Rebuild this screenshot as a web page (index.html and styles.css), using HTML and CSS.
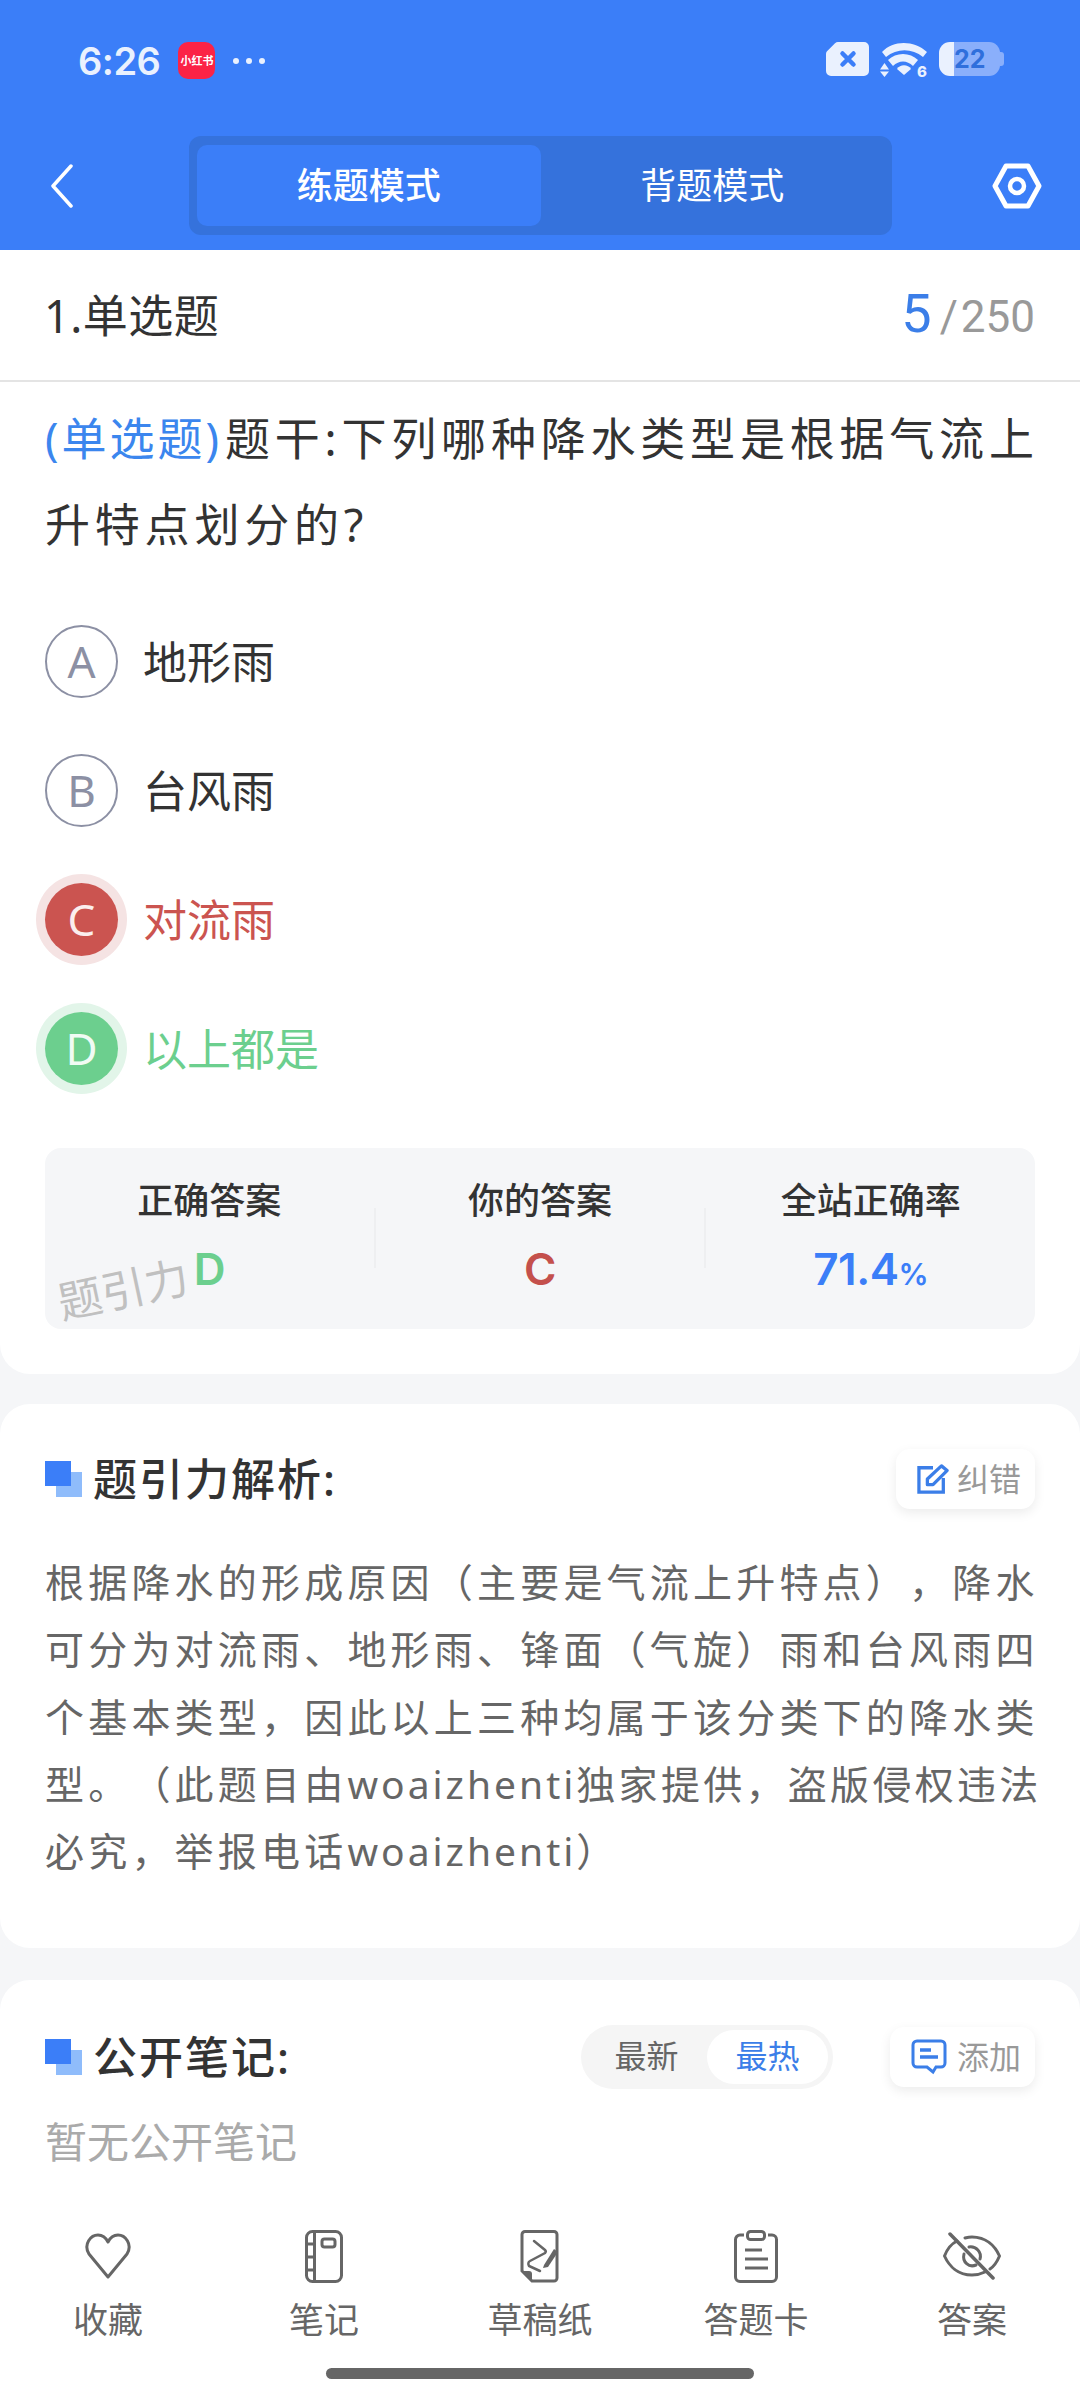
FILE: index.html
```html
<!DOCTYPE html>
<html lang="zh-CN">
<head>
    <meta charset="UTF-8">
    <meta name="viewport" content="width=device-width, initial-scale=1.0">
    <title>题引力</title>
    <link rel="stylesheet" href="styles.css">
</head>
<body>
    <div class="page">
        <header class="header">
            <div class="status">
                <div class="status-left">
                    <span class="time">6:26</span>
                    <span class="app-badge">小红书</span>
                    <span class="dots"><i></i><i></i><i></i></span>
                </div>
                <div class="status-right">
                    <svg width="43" height="34" viewBox="0 0 43 34">
                        <path d="M12 0H38a5 5 0 0 1 5 5V29a5 5 0 0 1-5 5H5a5 5 0 0 1-5-5V12a4 4 0 0 1 1.500-3.200L9 1.200A5 5 0 0 1 12 0Z" fill="#eaf1fe"/>
                        <path d="M16.500 11.500 L27.500 22.500 M27.500 11.500 L16.500 22.500" stroke="#3b7ef8" stroke-width="4.500" stroke-linecap="round"/>
                    </svg>
                    <svg width="48" height="42" viewBox="0 0 48 42">
                        <path d="M2 10 C13 -2 34 -2 47 10 L43 15 C32 6 17 6 6 15 Z" fill="#eaf1fe"/>
                        <path d="M8 18 C16 10 30 10 38 18 L33 24 C27 18 19 18 13 24 Z" fill="#eaf1fe"/>
                        <path d="M17 27 C20 22 28 22 31 27 L24 33 Z" fill="#eaf1fe"/>
                        <path d="M0 27.500 L4.500 21 L9 27.500 Z M0 29.500 L4.500 35 L9 29.500 Z" fill="#eaf1fe"/>
                        <text x="37" y="35" class="wifi-six">6</text>
                    </svg>
                    <div class="battery">
                        <div class="battery-body">22</div>
                        <i class="battery-nub"></i>
                    </div>
                </div>
            </div>
            <nav class="topnav">
                <svg class="back" width="24" height="44" viewBox="0 0 24 44">
                    <path d="M21 2 L3 22 L21 42" fill="none" stroke="#fff" stroke-width="3.500" stroke-linecap="round" stroke-linejoin="round"/>
                </svg>
                <div class="modes">
                    <div class="mode active">练题模式</div>
                    <div class="mode">背题模式</div>
                </div>
                <svg class="gear" width="50" height="46" viewBox="0 0 50 46">
                    <path d="M14 3 H36 L47 23 L36 43 H14 L3 23 Z" fill="none" stroke="#fff" stroke-width="5" stroke-linejoin="round"/>
                    <circle cx="25" cy="23" r="7" fill="none" stroke="#fff" stroke-width="4.500"/>
                </svg>
            </nav>
        </header>

        <section class="card card-first">
            <div class="title-row">
                <span class="title">1.单选题</span>
                <span class="counter"><b>5</b><i>/</i>250</span>
            </div>
            <div class="question"><span class="tag">(单选题)</span>题干:下列哪种降水类型是根据气流上升特点划分的?</div>

            <div class="options">
                <div class="option"><span class="letter">A</span>地形雨</div>
                <div class="option"><span class="letter">B</span>台风雨</div>
                <div class="option wrong"><span class="letter">C</span>对流雨</div>
                <div class="option right"><span class="letter">D</span>以上都是</div>
            </div>

            <div class="stats">
                <div class="stat">
                    <div class="stat-label">正确答案</div>
                    <div class="stat-value green">D</div>
                </div>
                <i class="stat-sep"></i>
                <div class="stat">
                    <div class="stat-label">你的答案</div>
                    <div class="stat-value red">C</div>
                </div>
                <i class="stat-sep"></i>
                <div class="stat">
                    <div class="stat-label">全站正确率</div>
                    <div class="stat-value blue">71.4<small>%</small></div>
                </div>
                <div class="watermark">题引力</div>
            </div>
        </section>

        <section class="card card-analysis">
            <div class="card-head">
                <h2 class="heading"><span class="squares"></span>题引力解析:</h2>
                <div class="tool-btn">
                    <svg width="32" height="30" viewBox="0 0 34 32">
                        <path d="M17 4 H2 V30 H28 V15" fill="none" stroke="#3b7ee8" stroke-width="3.500"/>
                        <path d="M11 22 V16 L26 2 L32 7 L17 22 Z" fill="none" stroke="#3b7ee8" stroke-width="3.500" stroke-linejoin="round"/>
                    </svg>
                    <span>纠错</span>
                </div>
            </div>
            <p class="analysis">根据降水的形成原因（主要是气流上升特点），降水可分为对流雨、地形雨、锋面（气旋）雨和台风雨四个基本类型，因此以上三种均属于该分类下的降水类型。（此题目由<span class="latin">woaizhenti</span><span class="tight">独家提供，盗版侵权违法</span><br>必究，举报电话<span class="latin">woaizhenti</span>）</p>
        </section>

        <section class="card card-notes">
            <div class="card-head">
                <h2 class="heading"><span class="squares"></span>公开笔记:</h2>
                <div class="notes-tools">
                    <div class="sorter">
                        <span>最新</span>
                        <span class="on">最热</span>
                    </div>
                    <div class="tool-btn tool-add">
                        <svg width="36" height="36" viewBox="0 0 36 36">
                            <path d="M6 2 H30 A4 4 0 0 1 34 6 V24 A4 4 0 0 1 30 28 H25 L22 33 L16 28 H6 A4 4 0 0 1 2 24 V6 A4 4 0 0 1 6 2 Z" fill="none" stroke="#3b7ee8" stroke-width="3"/>
                            <path d="M9 11 H20 M9 18 H27" stroke="#3b7ee8" stroke-width="3.500"/>
                        </svg>
                        <span>添加</span>
                    </div>
                </div>
            </div>
            <div class="no-notes">暂无公开笔记</div>
        </section>

        <footer class="tabbar">
            <div class="tab">
                <div class="tab-icon">
                    <svg width="46" height="46" viewBox="0 0 46 46">
                        <path d="M23 44 L4 21 C-2 11 6 2 13 2 C18 2 21 5 23 9 C25 5 28 2 33 2 C40 2 48 11 42 21 Z" fill="none" stroke="#666" stroke-width="3" stroke-linejoin="round"/>
                    </svg>
                </div>
                <span>收藏</span>
            </div>
            <div class="tab">
                <div class="tab-icon">
                    <svg width="38" height="53" viewBox="0 0 38 53">
                        <rect x="1.500" y="1.500" width="35" height="50" rx="6" fill="none" stroke="#666" stroke-width="3"/>
                        <path d="M9.500 2 V51 M2 14 H9 M2 27 H9 M2 40 H9" stroke="#666" stroke-width="3"/>
                        <rect x="17" y="9" width="13" height="8" rx="2.500" fill="none" stroke="#666" stroke-width="3"/>
                    </svg>
                </div>
                <span>笔记</span>
            </div>
            <div class="tab">
                <div class="tab-icon">
                    <svg width="40" height="53" viewBox="0 0 40 53">
                        <path d="M5 1.500 H34 A3 3 0 0 1 37 4.500 V48 A3 3 0 0 1 34 51 H12 L2 41 V4.500 A3 3 0 0 1 5 1.500 Z" fill="none" stroke="#666" stroke-width="3"/>
                        <path d="M2 41 H9 A3 3 0 0 1 12 44 V51 Z" fill="#666"/>
                        <path d="M14 11 L25 20 C26 21 26 22 25 23 L10 31 C8 32 8 34 9 36 L20 41" fill="none" stroke="#666" stroke-width="2.500" stroke-linecap="round"/>
                        <path d="M24 35 L34 19 L38 22 L28 37 L23 38 Z" fill="#666"/>
                    </svg>
                </div>
                <span>草稿纸</span>
            </div>
            <div class="tab">
                <div class="tab-icon">
                    <svg width="44" height="53" viewBox="0 0 44 53">
                        <path d="M10 5 H6 A4.500 4.500 0 0 0 1.500 9.500 V47 A4.500 4.500 0 0 0 6 51.500 H38 A4.500 4.500 0 0 0 42.500 47 V9.500 A4.500 4.500 0 0 0 38 5 H34" fill="none" stroke="#666" stroke-width="3"/>
                        <rect x="13.500" y="1.500" width="17" height="8" rx="3" fill="none" stroke="#666" stroke-width="3"/>
                        <path d="M11 20 H28 M11 29 H34 M11 38 H34" stroke="#666" stroke-width="3"/>
                    </svg>
                </div>
                <span>答题卡</span>
            </div>
            <div class="tab">
                <div class="tab-icon">
                    <svg width="58" height="48" viewBox="0 0 58 48">
                        <path d="M14 9 C6 13 3 20 1.500 24 C6 34 15 43 29 43 C34 43 38 42 42 40" fill="none" stroke="#666" stroke-width="3" stroke-linecap="round"/>
                        <path d="M22 6 C24 5.500 27 5 29 5 C43 5 52 14 56.500 24 C54 30 50 35 47 37" fill="none" stroke="#666" stroke-width="3" stroke-linecap="round"/>
                        <path d="M21 22 C19 30 26 36 33 33 M26 15 C33 14 39 20 37 27" fill="none" stroke="#666" stroke-width="3" stroke-linecap="round"/>
                        <path d="M7 2 L50 46" stroke="#666" stroke-width="3.500" stroke-linecap="round"/>
                    </svg>
                </div>
                <span>答案</span>
            </div>
        </footer>
        <div class="home-bar"><i></i></div>
    </div>
</body>
</html>
```

FILE: styles.css
```css
* {
    box-sizing: border-box;
}

body {
    margin: 0;
    font-family: "Noto Sans", "Noto Sans CJK SC", sans-serif;
    background-color: #f5f6f8;
    color: #333;
    text-spacing-trim: space-all;
}

.page {
    width: 1080px;
    height: 2400px;
    display: flex;
    flex-direction: column;
    overflow: hidden;
}

/* 顶部 */
.header {
    height: 250px;
    background-color: #3b7ef8;
}

.status {
    height: 136px;
    padding: 42px 76px 0 78px;
    display: flex;
    justify-content: space-between;
    align-items: flex-start;
}

.status-left {
    display: flex;
    align-items: center;
    gap: 18px;
    height: 37px;
}

.time {
    font-family: Inter, sans-serif;
    font-size: 38px;
    font-weight: 600;
    letter-spacing: -0.5px;
    color: #eaf1fe;
}

.app-badge {
    width: 37px;
    height: 37px;
    border-radius: 10px;
    background-color: #fb2346;
    color: #fff;
    font-size: 11px;
    font-weight: 700;
    line-height: 37px;
    text-align: center;
    white-space: nowrap;
}

.dots {
    display: flex;
    gap: 7px;
}

.dots i {
    width: 6px;
    height: 6px;
    border-radius: 50%;
    background-color: #eaf1fe;
}

.status-right {
    display: flex;
    align-items: flex-start;
    gap: 11px;
    height: 42px;
}

.wifi-six {
    font-family: Inter, sans-serif;
    font-size: 15px;
    font-weight: 800;
    fill: #eaf1fe;
}

.battery {
    display: flex;
    align-items: center;
}

.battery-body {
    width: 61px;
    height: 34px;
    border-radius: 11px;
    background: linear-gradient(to right, #eaf1fe 0, #eaf1fe 15px, #8aaffb 15px);
    padding-left: 15px;
    font-family: Inter, sans-serif;
    font-size: 25px;
    font-weight: 700;
    line-height: 34px;
    color: #2f6fdc;
}

.battery-nub {
    width: 4px;
    height: 14px;
    border-radius: 0 3px 3px 0;
    background-color: #8aaffb;
}

.topnav {
    height: 99px;
    padding: 0 38px 0 50px;
    display: flex;
    align-items: center;
}

.modes {
    width: 703px;
    height: 99px;
    margin-left: 115px;
    padding: 9px 8px;
    display: flex;
    border-radius: 12px;
    background-color: #3572dc;
}

.gear {
    margin-left: auto;
}

.mode {
    flex: 1;
    border-radius: 10px;
    color: #fff;
    font-size: 36px;
    line-height: 81px;
    text-align: center;
}

.mode.active {
    background-color: #3b7ef8;
    font-weight: 500;
}

/* 题目 */
.card {
    background-color: #fff;
}

.card-first {
    height: 1124px;
    border-radius: 0 0 30px 30px;
    padding: 0 45px;
}

.title-row {
    height: 132px;
    margin: 0 -45px;
    padding: 0 45px 3px;
    display: flex;
    align-items: center;
    justify-content: space-between;
    border-bottom: 2px solid #e4e4e4;
}

.title {
    font-size: 45px;
    letter-spacing: 0.5px;
    margin-left: -1px;
}

.counter {
    display: flex;
    align-items: baseline;
    font-family: Roboto, sans-serif;
    font-size: 44px;
    color: #999;
}

.counter b {
    font-size: 54px;
    font-weight: 400;
    color: #3b7ee8;
}

.counter i {
    font-style: normal;
    margin: 0 3px 0 8px;
}

.question {
    margin: 14px -8px 0 0;
    font-size: 45px;
    letter-spacing: 4.8px;
    line-height: 86px;
}

.tag {
    color: #3b86ee;
    letter-spacing: 3px;
    margin-right: 3px;
}

.options {
    margin-top: 29px;
}

.option {
    height: 129px;
    padding-bottom: 4px;
    display: flex;
    align-items: center;
    gap: 25px;
    font-size: 44px;
}

.letter {
    width: 73px;
    height: 73px;
    margin-top: 4px;
    border: 2px solid #8c90a4;
    border-radius: 50%;
    color: #8c90a4;
    font-size: 44px;
    line-height: 68px;
    text-align: center;
}

.wrong {
    color: #cb5450;
}

.wrong .letter {
    border: 0;
    background-color: #cb5450;
    box-shadow: 0 0 0 9px #f5e3e3;
    color: #fbeeee;
    line-height: 72px;
}

.right {
    color: #6ccf8e;
}

.right .letter {
    border: 0;
    background-color: #6ccf8e;
    box-shadow: 0 0 0 9px #e2f5e9;
    color: #f0fbf4;
    line-height: 72px;
}

.stats {
    position: relative;
    margin-top: 35px;
    height: 181px;
    border-radius: 16px;
    background-color: #f5f6f8;
    display: grid;
    grid-template-columns: 1fr 2px 1fr 2px 1fr;
}

.stat {
    padding-top: 28px;
    text-align: center;
}

.stat-label {
    font-size: 36px;
    font-weight: 500;
    line-height: 50px;
}

.stat-value {
    margin-top: 15px;
    font-family: Inter, sans-serif;
    font-size: 44px;
    font-weight: 600;
    letter-spacing: -0.5px;
    line-height: 56px;
}

.stat-value small {
    font-size: 30px;
}

.stat-sep {
    height: 60px;
    margin-top: 60px;
    background-color: #eeeff1;
}

.green {
    color: #6ccf8e;
}

.red {
    color: #c4504c;
}

.blue {
    color: #3b7ef8;
}

.watermark {
    position: absolute;
    left: 12px;
    top: 116px;
    font-size: 44px;
    line-height: 50px;
    color: #c0c0c0;
    transform: rotate(-12deg);
}

/* 解析 */
.card-analysis {
    height: 544px;
    margin-top: 30px;
    border-radius: 30px;
    padding: 45px 45px 0;
}

.card-head {
    display: flex;
    align-items: center;
    justify-content: space-between;
}

.heading {
    margin: 0;
    display: flex;
    align-items: center;
    font-size: 44px;
    font-weight: 500;
    letter-spacing: 2px;
    line-height: 48px;
}

.squares {
    position: relative;
    width: 37px;
    height: 36px;
    margin-right: 11px;
    background: linear-gradient(#8fbcfb, #8fbcfb) right bottom / 26px 25px no-repeat;
}

.squares::before {
    content: "";
    position: absolute;
    left: 0;
    top: 0;
    width: 26px;
    height: 25px;
    background-color: #3b7ef8;
}

.tool-btn {
    height: 60px;
    padding: 0 14px 0 21px;
    display: flex;
    align-items: center;
    gap: 8px;
    border-radius: 14px;
    background-color: #fff;
    box-shadow: 0 4px 12px rgba(0, 0, 0, 0.08);
    color: #999;
    font-size: 32px;
}

.tool-btn span {
    margin-top: -5px;
}

.tool-add {
    gap: 10px;
}

.analysis {
    margin: 39px -8px 0 0;
    font-size: 39px;
    letter-spacing: 4.2px;
    line-height: 67.3px;
    color: #666;
}

.latin {
    letter-spacing: 3px;
}

.tight {
    letter-spacing: 3.3px;
}

/* 笔记 */
.card-notes {
    flex: 1;
    margin-top: 32px;
    border-radius: 30px 30px 0 0;
    padding: 45px 45px 0;
}

.notes-tools {
    display: flex;
    align-items: center;
    gap: 57px;
}

.sorter {
    height: 64px;
    padding: 5px;
    display: flex;
    align-items: center;
    border-radius: 32px;
    background-color: #f5f5f5;
    font-size: 32px;
    color: #666;
}

.sorter span {
    width: 121px;
    padding-bottom: 3px;
    line-height: 51px;
    text-align: center;
}

.sorter .on {
    border-radius: 27px;
    background-color: #fff;
    color: #3b7ee8;
}

.no-notes {
    margin-top: 23px;
    font-size: 42px;
    line-height: 60px;
    color: #aaa;
}

/* 底部 */
.tabbar {
    height: 168px;
    padding-top: 16px;
    display: grid;
    grid-template-columns: repeat(5, 216px);
    align-content: start;
    background-color: #fff;
    font-size: 35px;
    color: #666;
    text-align: center;
}

.tab-icon {
    height: 80px;
    display: flex;
    align-items: center;
    justify-content: center;
}

.tab span {
    display: block;
    line-height: 48px;
}

.home-bar {
    height: 32px;
    background-color: #fff;
}

.home-bar i {
    display: block;
    width: 428px;
    height: 11px;
    margin: 0 auto;
    border-radius: 6px;
    background-color: #666;
}
```
